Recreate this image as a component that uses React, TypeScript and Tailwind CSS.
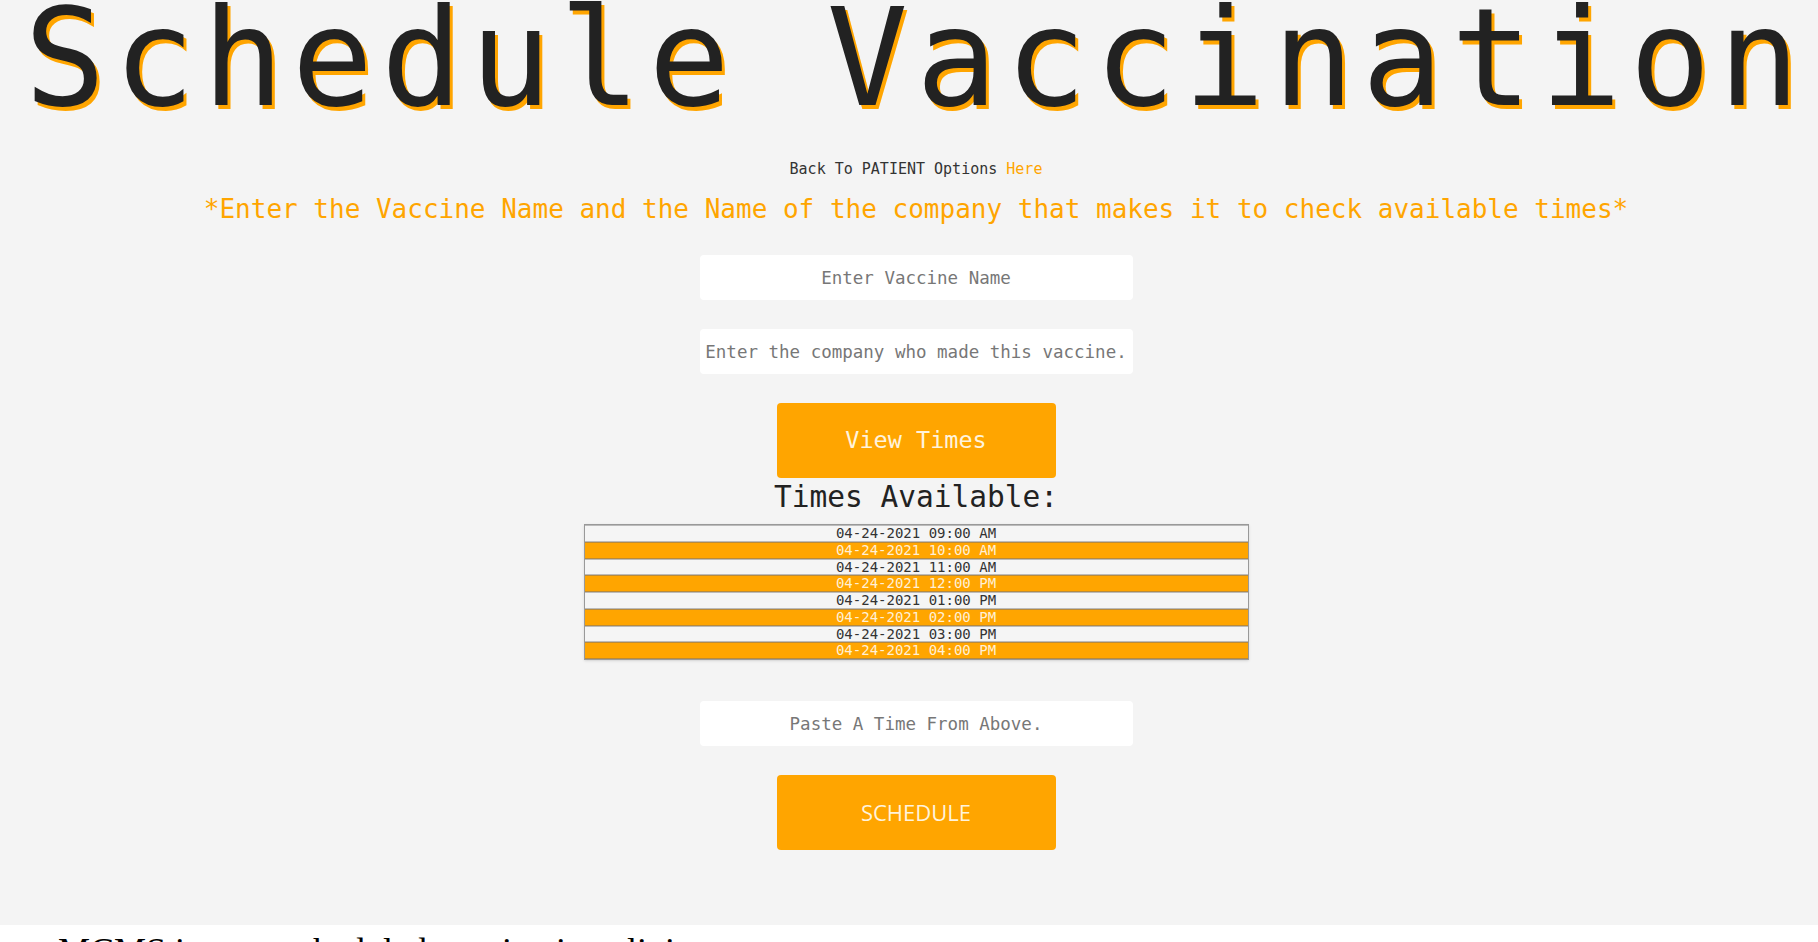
const times = [
  "04-24-2021 09:00 AM",
  "04-24-2021 10:00 AM",
  "04-24-2021 11:00 AM",
  "04-24-2021 12:00 PM",
  "04-24-2021 01:00 PM",
  "04-24-2021 02:00 PM",
  "04-24-2021 03:00 PM",
  "04-24-2021 04:00 PM",
]

const mono = "font-['DejaVu_Sans_Mono',monospace]"

const App = () => {
  return (
    <div className="min-h-screen bg-white">
      <div className={`bg-[#f4f4f4] h-[925px] pl-[14px] flex flex-col items-center overflow-hidden ${mono}`}>
        <h1 className="mt-[-9px] text-[135px] leading-none tracking-[7.9px] text-[#222] whitespace-nowrap [text-shadow:3px_4px_0_#ffa500]">
          Schedule Vaccination
        </h1>
        <p className="mt-[34px] text-[15px] leading-[18px] text-[#333]">
          Back To PATIENT Options <a className="text-[#ffa500]">Here</a>
        </p>
        <p className="mt-[16px] text-[26px] leading-[31px] text-[#ffa500]">
          *Enter the Vaccine Name and the Name of the company that makes it to check available times*
        </p>
        <input
          className="mt-[30px] w-[433px] h-[45px] bg-white rounded text-center text-[17.5px] outline-none placeholder:text-[#777]"
          placeholder="Enter Vaccine Name"
        />
        <input
          className="mt-[29px] w-[433px] h-[45px] bg-white rounded text-center text-[17.5px] outline-none placeholder:text-[#777]"
          placeholder="Enter the company who made this vaccine."
        />
        <button className="mt-[29px] w-[279px] h-[75px] bg-[#ffa500] rounded text-[23.5px] text-[#fff3dc]">
          View Times
        </button>
        <h2 className="mt-[2px] text-[29.5px] leading-[34px] text-[#222]">Times Available:</h2>
        <div className="mt-[10px] w-[665px] border border-[#999] shadow-sm">
          {times.map((t, i) => (
            <div
              key={t}
              className={
                i % 2 === 0
                  ? "h-[16.75px] leading-[15px] text-center text-[14px] bg-[#f5f5f5] text-[#333] border-y border-[#bbb]"
                  : "h-[16.75px] leading-[15px] text-center text-[14px] bg-[#ffa500] text-[#fff0d6] border-y border-[#b98a3a]"
              }
            >
              {t}
            </div>
          ))}
        </div>
        <input
          className="mt-[41px] w-[433px] h-[45px] bg-white rounded text-center text-[17.5px] outline-none placeholder:text-[#777]"
          placeholder="Paste A Time From Above."
        />
        <button className="mt-[29px] w-[279px] h-[75px] bg-[#ffa500] rounded text-[22px] text-[#fff3dc] font-['Open_Sans',sans-serif]">
          SCHEDULE
        </button>
      </div>
      <p className="pl-[58px] pt-[8px] text-[36px] leading-none text-black font-['Liberation_Serif',serif]">
        MCMS is your scheduled vaccination clinic
      </p>
    </div>
  )
}

export default App
